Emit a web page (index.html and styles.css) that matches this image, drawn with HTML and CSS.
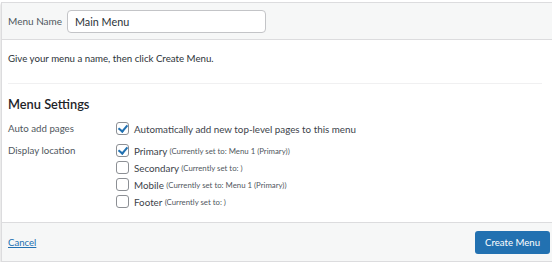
FILE: index.html
```html
<!DOCTYPE html>
<html>
<head>
<meta charset="utf-8">
<link rel="stylesheet" href="styles.css">
</head>
<body>
<div class="frame">
  <div class="header">
    <label class="name-label">Menu Name</label>
    <div class="name-input">Main Menu</div>
  </div>
  <div class="body">
    <p class="hint">Give your menu a name, then click Create Menu.</p>
    <div class="settings">
      <h3 class="settings-title">Menu Settings</h3>
      <div class="row row-auto">
        <div class="row-label">Auto add pages</div>
        <div class="row-options">
          <div class="opt"><span class="cb checked"></span>Automatically add new top-level pages to this menu</div>
        </div>
      </div>
      <div class="row">
        <div class="row-label">Display location</div>
        <div class="row-options">
          <div class="opt"><span class="cb checked"></span>Primary <small>(Currently set to: Menu 1 (Primary))</small></div>
          <div class="opt"><span class="cb"></span>Secondary <small>(Currently set to: )</small></div>
          <div class="opt"><span class="cb"></span>Mobile <small>(Currently set to: Menu 1 (Primary))</small></div>
          <div class="opt"><span class="cb"></span>Footer <small>(Currently set to: )</small></div>
        </div>
      </div>
    </div>
  </div>
  <div class="footer">
    <a class="cancel" href="#">Cancel</a>
    <span class="btn">Create Menu</span>
  </div>
</div>
</body>
</html>
```

FILE: styles.css
```css
html, body {
  margin: 0;
  padding: 0;
  background: #ffffff;
  overflow: hidden;
}
body {
  padding: 2px 0 0 1px;
  font-family: Lato, "Open Sans", sans-serif;
  color: #2c3338;
}
.frame {
  width: 560px;
  border: 1px solid #dcdcde;
  box-shadow: 0 2px 2px rgba(0,0,0,0.25);
  background: #fff;
}
.header {
  display: flex;
  align-items: center;
  height: 36px;
  padding: 0 6px;
  background: #f6f7f7;
  border-bottom: 1px solid #dcdcde;
}
.name-label {
  flex: none;
  white-space: nowrap;
  font-size: 10px;
  color: #50575e;
  width: 59px;
}
.name-input {
  box-sizing: border-box;
  width: 199px;
  height: 23px;
  border: 1px solid #c3c4c7;
  border-radius: 4px;
  background: #fff;
  font-size: 10.8px;
  line-height: 21px;
  padding-left: 7px;
  color: #2c3338;
}
.body {
  padding: 0 6px;
}
.hint {
  margin: 0;
  padding: 11px 0 0;
  height: 32px;
  font-size: 9.7px;
  line-height: 14px;
  color: #2c3338;
  border-bottom: 1px solid #f0f0f1;
  width: 534px;
}
.settings {
  padding: 11px 0 12px;
}
.settings-title {
  margin: 0 0 7px;
  font-size: 12.8px;
  font-weight: 600;
  line-height: 18px;
  color: #1d2327;
}
.row {
  display: flex;
}
.row-auto {
  margin-bottom: 5px;
}
.row-label {
  width: 108px;
  font-size: 9.7px;
  color: #50575e;
  line-height: 17px;
}
.row-options {
  display: flex;
  flex-direction: column;
}
.opt {
  display: flex;
  align-items: center;
  height: 17px;
  font-size: 9.8px;
  color: #3c434a;
  white-space: pre;
}
.opt small {
  font-size: 7.8px;
  color: #50575e;
}
.cb {
  box-sizing: border-box;
  width: 13px;
  height: 13px;
  border: 1px solid #8c8f94;
  border-radius: 3px;
  background: #fff;
  margin-right: 5px;
  position: relative;
  flex: none;
}
.cb.checked::after {
  content: "";
  position: absolute;
  left: 3px;
  top: 0px;
  width: 4px;
  height: 7px;
  border: solid #2271b1;
  border-width: 0 2px 2px 0;
  transform: rotate(40deg);
}
.footer {
  display: flex;
  align-items: center;
  justify-content: space-between;
  height: 38px;
  padding: 0 6px;
  background: #f6f7f7;
  border-top: 1px solid #dcdcde;
}
.cancel {
  font-size: 9.6px;
  color: #2271b1;
  text-decoration: underline;
}
.btn {
  margin-right: 6px;
  background: #2271b1;
  color: #fff;
  font-size: 9.6px;
  border-radius: 3px;
  height: 23px;
  line-height: 23px;
  padding: 0 10px;
}
```
